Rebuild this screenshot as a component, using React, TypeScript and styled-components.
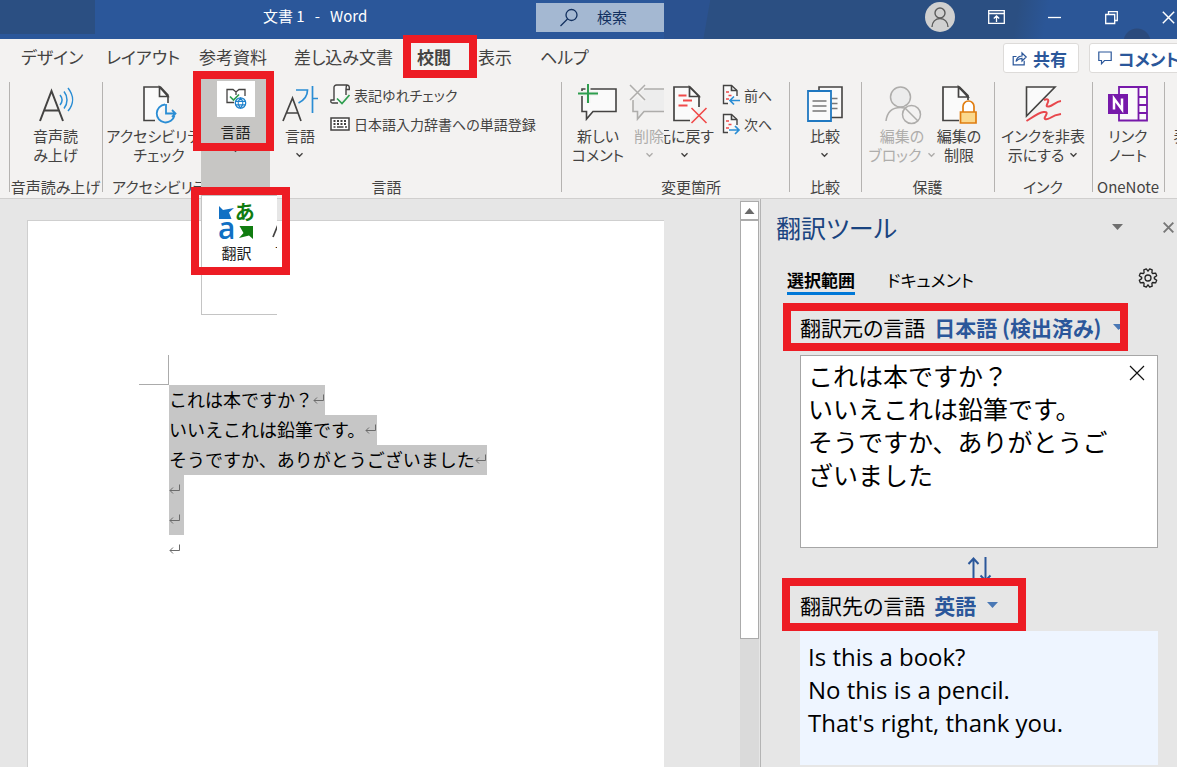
import React from "react";
import styled, { createGlobalStyle, css } from "styled-components";

const RED = "#ed1c24";
const BLUE = "#2b579a";
const INK = "#444342";
const MUTED = "#aeadab";

const GlobalStyle = createGlobalStyle`
  *, *::before, *::after { box-sizing: border-box; }
  body {
    margin: 0;
    background: #e6e6e6;
    color: ${INK};
    font-family: "Noto Sans CJK JP", sans-serif;
    font-size: 15px;
    font-feature-settings: "palt";
  }
  button, select, textarea, input {
    margin: 0;
    padding: 0;
    border: 0;
    background: none;
    color: inherit;
    font: inherit;
    font-feature-settings: inherit;
  }
  svg { display: block; flex: none; overflow: visible; }
`;

const Window = styled.div`
  display: flex;
  flex-direction: column;
  height: 100vh;
  overflow: hidden;
`;

/* Red marker drawn over the part it points out */
const Marker = styled.span<{ $inset: string }>`
  position: absolute;
  inset: ${(p) => p.$inset};
  border: 8px solid ${RED};
  pointer-events: none;
  z-index: 3;
`;

/* ---------- title bar ---------- */

const TitleBar = styled.header`
  display: flex;
  flex: none;
  height: 39px;
  background: ${BLUE};
  color: #fff;
`;

const TitleShade = styled.div`
  width: 95px;
  height: 34px;
  background: #2b4f82;
`;

const DocTitle = styled.h1`
  margin: 0 0 0 168px;
  width: 273px;
  font-size: 15px;
  font-weight: 400;
  line-height: 31px;
  white-space: pre;
`;

const Search = styled.label`
  display: flex;
  align-items: center;
  gap: 18px;
  width: 128px;
  height: 29px;
  margin-top: 3px;
  padding-left: 23px;
  background: #a4b8d2;
  color: #12305f;
`;

const SearchInput = styled.input`
  width: 60px;
  height: 27px;
  padding-bottom: 2px;
  outline: 0;
  &::placeholder { color: #12305f; opacity: 1; }
`;

const TitleArt = styled.div`
  display: flex;
  flex: 1;
  justify-content: flex-end;
  align-items: center;
  padding-bottom: 5px;
  overflow: hidden;
  background:
    radial-gradient(circle at calc(100% - 40px) 42px, #2b4a7c 13px, transparent 14px),
    linear-gradient(100deg, #2b5290 45px, #2b4f82 46px, #2b4f82 350px, #2b5697 380px);
`;

const Avatar = styled.button`
  display: grid;
  place-items: center;
  width: 30px;
  height: 30px;
  margin-right: 33px;
  border-radius: 50%;
  background: #d0d0d0;
`;

const WindowButton = styled.button<{ $gap: number }>`
  flex: none;
  margin-right: ${(p) => p.$gap}px;
`;

/* ---------- tabs ---------- */

const TabBar = styled.nav`
  display: flex;
  flex: none;
  align-items: flex-start;
  height: 39px;
  padding-left: 21px;
  background: #f3f2f1;
`;

const Tab = styled.a<{ $width: number; $active?: boolean }>`
  position: relative;
  flex: none;
  width: ${(p) => p.$width}px;
  color: ${INK};
  font-size: 17px;
  font-weight: ${(p) => (p.$active ? 700 : 400)};
  line-height: 36px;
  text-decoration: none;
  white-space: nowrap;
`;

const TabActions = styled.div`
  display: flex;
  flex: 1;
  justify-content: flex-end;
  gap: 10px;
  margin-right: -16px;
  padding-top: 4px;
`;

const ActionButton = styled.button<{ $width: number }>`
  display: flex;
  flex: none;
  align-items: center;
  gap: 6px;
  width: ${(p) => p.$width}px;
  height: 30px;
  padding-left: 8px;
  border: 1px solid #dddbd9;
  border-radius: 3px;
  background: #fff;
  color: ${BLUE};
  font-size: 17px;
  font-weight: 700;
  white-space: nowrap;
`;

/* ---------- ribbon ---------- */

const Ribbon = styled.div`
  display: flex;
  flex: none;
  height: 121px;
  padding-left: 9px;
  border-bottom: 1px solid #d0cfce;
  background: #f3f2f1;
`;

const Group = styled.section<{ $width: number; $plain?: boolean }>`
  display: flex;
  flex: none;
  flex-direction: column;
  justify-content: space-between;
  width: ${(p) => p.$width}px;
  overflow: hidden;
  background: ${(p) =>
    p.$plain ? "none" : "linear-gradient(#b5b3b1, #b5b3b1) 0 4px / 1px 110px no-repeat"};
`;

const GroupTools = styled.div<{ $pad?: string }>`
  display: flex;
  padding: ${(p) => p.$pad || "0"};
`;

const GroupName = styled.h2<{ $pad?: string }>`
  margin: 0;
  padding: ${(p) => p.$pad || "0"};
  font-size: 15px;
  font-weight: 400;
  line-height: 22px;
  text-align: center;
  white-space: nowrap;
`;

const IconSlot = styled.span`
  height: 36px;
`;

const ToolLabel = styled.span`
  display: flex;
  flex-direction: column;
  align-items: center;
  margin-top: 4px;
`;

const LabelLine = styled.span`
  display: flex;
  align-items: center;
  gap: 5px;
  min-height: 19px;
`;

/* A button partly hidden by its neighbour keeps one side in view */
const clipSides = {
  left: css`
    align-items: flex-start;
    overflow: hidden;
    ${ToolLabel} { margin-left: 5px; }
  `,
  right: css`
    align-items: flex-end;
    overflow: hidden;
    ${IconSlot} { margin-right: 6px; }
  `,
  none: css`
    align-items: center;
  `,
};

const Tool = styled.button<{ $width: number; $clip?: "left" | "right" }>`
  display: flex;
  flex: none;
  flex-direction: column;
  width: ${(p) => p.$width}px;
  padding-top: 8px;
  line-height: 19px;
  text-align: center;
  white-space: nowrap;
  ${(p) => clipSides[p.$clip || "none"]}
  &:disabled { color: ${MUTED}; }
`;

const ToolStack = styled.div<{ $gap?: number }>`
  display: flex;
  flex-direction: column;
  gap: 8px;
  margin-left: ${(p) => p.$gap || 0}px;
  padding-top: 6px;
`;

const SmallTool = styled.button`
  display: flex;
  align-items: center;
  gap: 4px;
  height: 21px;
  font-size: 14px;
  white-space: nowrap;
`;

const OpenColumn = styled.div`
  position: relative;
  flex: none;
  width: 69px;
  background: #c7c6c4;
`;

const OpenTool = styled.button`
  display: flex;
  flex-direction: column;
  align-items: center;
  gap: 5px;
  width: 100%;
  padding-top: 3px;
  color: #222;
  line-height: 20px;
`;

const IconTile = styled.span`
  display: grid;
  place-items: center;
  width: 38px;
  height: 36px;
  background: #fff;
`;

const DropMenu = styled.div`
  position: absolute;
  top: 117px;
  left: 0;
  z-index: 2;
`;

const MenuSheet = styled.div`
  display: flex;
  width: 76px;
  height: 120px;
  overflow: hidden;
  border: solid #c4c4c4;
  border-width: 1px 0 1px 1px;
  background: #fff;
`;

const MenuItem = styled.button<{ $width: number }>`
  display: flex;
  flex: none;
  flex-direction: column;
  align-items: center;
  gap: 2px;
  width: ${(p) => p.$width}px;
  height: 70px;
  padding-top: 6px;
  color: #222;
  line-height: 22px;
`;

/* ---------- document ---------- */

const Body = styled.main`
  display: flex;
  flex: 1;
  min-height: 0;
`;

const Canvas = styled.div`
  display: flex;
  flex: 1;
  padding: 21px 76px 0 27px;
`;

const Sheet = styled.article`
  flex: 1;
  padding-top: 134px;
  border: solid #cfcfcf;
  border-width: 1px 0 0 1px;
  background: #fff;
`;

const CropMark = styled.div`
  width: 30px;
  height: 30px;
  margin-left: 111px;
  border: solid #ababab;
  border-width: 0 1px 1px 0;
`;

const Paragraph = styled.p<{ $selected?: boolean }>`
  display: flex;
  align-items: center;
  width: max-content;
  min-width: 15px;
  height: 30px;
  margin: 0 0 0 141px;
  padding-bottom: 2px;
  background: ${(p) => (p.$selected ? "#c6c6c6" : "none")};
  color: #000;
  font-size: 18px;
  font-feature-settings: normal;
  white-space: nowrap;
`;

const Scrollbar = styled.div`
  display: flex;
  flex: none;
  flex-direction: column;
  width: 19px;
  padding-top: 2px;
  background: #dadada;
`;

const ScrollUp = styled.button`
  display: grid;
  place-items: center;
  height: 19px;
  border: 1px solid #ababab;
  background: #fff;
`;

const ScrollThumb = styled.div`
  flex: 0 1 74%;
  border: 1px solid #ababab;
  background: #fff;
`;

/* ---------- translator pane ---------- */

const Pane = styled.aside`
  flex: 0 0 417px;
  margin-left: 1px;
  border-left: 1px solid #b4b4b4;
  color: #000;
`;

const PaneHeader = styled.div`
  display: flex;
  align-items: center;
  height: 48px;
  padding: 8px 0 0 15px;
`;

const PaneTitle = styled.h2`
  flex: 1;
  margin: 0;
  color: #1a4480;
  font-size: 25px;
  font-weight: 400;
  line-height: 36px;
`;

const PaneButton = styled.button<{ $gap: number }>`
  margin-right: ${(p) => p.$gap}px;
`;

const PaneTabs = styled.div`
  display: flex;
  align-items: flex-end;
  height: 48px;
  padding: 0 19px 0 26px;
`;

const PaneTab = styled.button<{ $active?: boolean }>`
  margin-right: 32px;
  padding-bottom: 1px;
  border-bottom: 3px solid ${(p) => (p.$active ? "#0078d7" : "transparent")};
  font-size: 17px;
  font-weight: ${(p) => (p.$active ? 700 : 400)};
  line-height: 22px;
`;

const GearButton = styled.button`
  margin: 0 0 7px auto;
`;

const LanguageRow = styled.div<{ $width: number; $height: number }>`
  display: flex;
  align-items: center;
  width: ${(p) => p.$width}px;
  height: ${(p) => p.$height}px;
  margin-left: 21px;
  padding-left: 10px;
  overflow: hidden;
  border: 8px solid ${RED};
  font-size: 21px;
  white-space: nowrap;
`;

const SourceRow = styled(LanguageRow)`
  margin: 8px 0 0 22px;
  padding-left: 9px;
`;

const LanguageSelect = styled.select`
  appearance: none;
  margin: 0 11px 0 9px;
  color: ${BLUE};
  font-weight: 700;
  outline: 0;
`;

const SourceBox = styled.div`
  display: flex;
  align-items: flex-start;
  height: 193px;
  margin: 4px 19px 0 39px;
  border: 1px solid #a6a6a6;
  background: #fff;
`;

const SourceText = styled.textarea`
  flex: 1;
  min-width: 0;
  height: 188px;
  padding: 3px 0 0 7px;
  overflow: hidden;
  resize: none;
  outline: 0;
  font-size: 25px;
  font-feature-settings: normal;
  line-height: 33px;
`;

const ClearButton = styled.button`
  margin: 9px 12px 0 0;
`;

const SwapRow = styled.div`
  display: flex;
  justify-content: center;
  height: 30px;
  margin: 0 19px 0 39px;
  padding-top: 8px;
  overflow: hidden;
`;

const Output = styled.output`
  display: block;
  height: 134px;
  margin: 0 19px 0 39px;
  padding: 9px 8px;
  background: #eef5ff;
  font-family: "Open Sans", "Noto Sans", sans-serif;
  font-size: 24px;
  line-height: 33px;
  white-space: pre-line;
`;

/* ---------- icons ---------- */

const Caret = ({ color = INK }: { color?: string }) => (
  <svg width="9" height="6" fill="none" stroke={color} strokeWidth="1.4">
    <path d="M1.5 1.2l3 3 3-3" />
  </svg>
);

const Triangle = ({ color, up }: { color: string; up?: boolean }) => (
  <svg width="11" height="6" fill={color}>
    <path d={up ? "M5.5 0l5 6H.5z" : "M0 0h11L5.5 6z"} />
  </svg>
);

const Cross = ({ size, color, weight = 1.4 }: { size: number; color: string; weight?: number }) => (
  <svg width={size} height={size} viewBox="0 0 16 16" fill="none" stroke={color} strokeWidth={weight}>
    <path d="M1 1l14 14M15 1L1 15" />
  </svg>
);

const SearchIcon = () => (
  <svg width="20" height="20" fill="none" stroke="#12305f" strokeWidth="1.3">
    <circle cx="12.5" cy="7" r="5.5" />
    <path d="M8.5 11L1.5 18" />
  </svg>
);

const PersonIcon = () => (
  <svg width="20" height="22" fill="none" stroke="#5c5c5c" strokeWidth="1.4">
    <circle cx="10" cy="7" r="5" />
    <path d="M2 21c0-5 3.5-8.5 8-8.5s8 3.5 8 8.500" />
  </svg>
);

const RibbonModeIcon = () => (
  <svg width="17" height="14" fill="none" stroke="#fff" strokeWidth="1.3">
    <path d="M.7.7h15.6v12.6H.7zM.7 3.5h15.6M8.5 12V6M5.8 8.5l2.7-2.7 2.7 2.7" />
  </svg>
);

const MinimiseIcon = () => (
  <svg width="13" height="13" stroke="#fff" strokeWidth="1.3"><path d="M0 6.500h13" /></svg>
);

const RestoreIcon = () => (
  <svg width="13" height="13" fill="none" stroke="#fff" strokeWidth="1.3">
    <path d="M.7 3.5h9v9h-9zM3.5 3.5V.7h8.800v8.800H9.700" />
  </svg>
);

const ShareIcon = () => (
  <svg width="15" height="15" fill="none" stroke={BLUE} strokeWidth="1.2">
    <path d="M4.5 5.5H1.200v8.300h11v-4" />
    <path d="M4 10.5c.5-3.500 2.500-5.300 6-5.500V2l4.200 4-4.200 4V7.300c-3 0-4.500 1-6 3.200z" />
  </svg>
);

const CommentIcon = () => (
  <svg width="14" height="14" fill="none" stroke={BLUE} strokeWidth="1.2">
    <path d="M.8 1h12.400v8.500H6.500L3.500 12.800V9.500H.8z" />
  </svg>
);

const ReadAloudIcon = () => (
  <svg width="36" height="36" fill="none">
    <path d="M2 35L13.500 5 25 35M6 24.500h15" stroke={INK} strokeWidth="2" />
    <g stroke="#2a8dd4" strokeWidth="1.5">
      <path d="M22 9c2.500 3 2.500 7 0 10M26 5.500c4 5 4 12 0 17M30 2c6 7.500 6 16 0 23" />
    </g>
  </svg>
);

const AccessibilityIcon = () => (
  <svg width="34" height="36" fill="none">
    <path d="M13 34.500H2V1h16.500L26 9v8" fill="#fafafa" stroke={INK} strokeWidth="1.6" />
    <path d="M17.500 1v9.500H26z" fill="#fafafa" stroke={INK} strokeWidth="1.6" />
    <path d="M23 18.500a9 9 0 1 0 9.500 11" stroke="#2a8dd4" strokeWidth="1.8" />
    <path d="M24 18v9.500h9.500M30 24l3.500 3.500L30 31" stroke="#2a8dd4" strokeWidth="1.8" />
  </svg>
);

const BookGlobeIcon = () => (
  <svg width="20" height="22" fill="none">
    <path d="M8 14.500H1v-13h6l3 2.500 3-2.500h6V8M10 4v3" stroke={INK} strokeWidth="1.3" />
    <path d="M4 8.500l3.500 3.500L13 6.500" stroke="#2e9e4f" strokeWidth="1.7" />
    <circle cx="14.5" cy="15" r="5.2" fill="#fff" stroke="#1b80cc" strokeWidth="1.3" />
    <path d="M9.500 13.300h10M9.500 16.800h10M14.500 10c-3 3-3 7 0 10 3-3 3-7 0-10z" stroke="#1b80cc" strokeWidth="1.2" />
  </svg>
);

const LanguageIcon = () => (
  <svg width="36" height="36" fill="none">
    <path d="M1 35L10.500 12 19 35M4.500 27h12" stroke={INK} strokeWidth="1.7" />
    <path d="M14 4h11.500c0 6-3 10-9 13M30.500 0v27M30.500 12.500h5.500" stroke="#2a8dd4" strokeWidth="1.7" />
  </svg>
);

const ScrollCheckIcon = () => (
  <svg width="20" height="21" fill="none">
    <path d="M8 19H2.500c-1.500 0-2-1-1.500-3h3V3.500C4 2 5 1 6.500 1H17c2 0 2.500 1.500 2.300 4.500H16V11M17 1c-1 1-1 2.500-1 4.500" fill="#fafafa" stroke={INK} strokeWidth="1.4" />
    <path d="M7 14.500l5 5 7.500-8.500" stroke="#2e9e4f" strokeWidth="1.7" />
  </svg>
);

const KeyboardIcon = () => (
  <svg width="20" height="14" fill="none" stroke={INK}>
    <path d="M1 1h18v12H1z" strokeWidth="1.5" fill="#fff" />
    <path d="M3.500 4h13.500M3.500 7h13.500" strokeWidth="2" strokeDasharray="2 1.5" />
    <path d="M3.500 10h2M7 10h6.500M15 10h2" strokeWidth="1.5" />
  </svg>
);

const NewCommentIcon = () => (
  <svg width="38" height="36" fill="none">
    <path d="M3 3h34v22.500H14L7.500 33v-7.500H3z" fill="#fafafa" stroke={INK} strokeWidth="1.6" />
    <path d="M9 -2v19M-1 7.500h20" stroke="#f3f2f1" strokeWidth="5" />
    <path d="M9 -2v19M-1 7.500h20" stroke="#2e9e4f" strokeWidth="2" />
  </svg>
);

const DeleteCommentIcon = () => (
  <svg width="38" height="36" fill="none">
    <path d="M15 3h23v22.500H15L8.500 33v-7.500H4V14" fill="#ededed" stroke={MUTED} strokeWidth="1.6" />
    <path d="M0 -1l15 15M15-1L0 14" stroke="#f3f2f1" strokeWidth="5" />
    <path d="M1 -1l15 15M16-1L1 14" stroke={MUTED} strokeWidth="1.5" />
  </svg>
);

const RejectIcon = () => (
  <svg width="36" height="38" fill="none">
    <path d="M18 34.500H2V1h16l9 9v11" fill="#fafafa" stroke={INK} strokeWidth="1.7" />
    <path d="M17.500 1v9.500H27z" fill="#fafafa" stroke={INK} strokeWidth="1.7" />
    <path d="M6.500 9.500h8M11 14.500h9M6.500 19.500h9" stroke="#f04a4a" strokeWidth="1.8" />
    <path d="M19.500 22l15 15M34.500 22l-15 15" stroke="#f04a4a" strokeWidth="1.6" />
  </svg>
);

const StepIcon = ({ forward }: { forward?: boolean }) => (
  <svg width="18" height="21" fill="none">
    <path d="M6 19.500H1.500v-18h8l5.500 5V12" fill="#fafafa" stroke={INK} strokeWidth="1.4" />
    <path d="M9.500 1.500v5H15" stroke={INK} strokeWidth="1.6" />
    <path d="M4 8h3M6.500 11.500h3M4 15h3" stroke="#f04a4a" strokeWidth="1.6" />
    <path
      d={forward ? "M7 17h10M13 13l4 4-4 4" : "M18 16.500H8M12 12.500l-4 4 4 4"}
      stroke="#2a8dd4"
      strokeWidth="1.7"
    />
  </svg>
);

const CompareIcon = () => (
  <svg width="36" height="36" fill="none">
    <path d="M12 1h23v30.500H12z" fill="#fafafa" stroke={INK} strokeWidth="1.6" />
    <path d="M25 12.500h5.500M25 17.500h5.500M25 22.500h5.500" stroke="#777" strokeWidth="1.5" />
    <path d="M1 5h23v30H1z" fill="#fafafa" stroke="#1f78c1" strokeWidth="1.8" />
    <path d="M5.500 15h14M5.500 20h14M5.500 25h14" stroke="#777" strokeWidth="1.5" />
  </svg>
);

const BlockAuthorsIcon = () => (
  <svg width="34" height="38" fill="none" stroke={MUTED} strokeWidth="1.5">
    <circle cx="15.5" cy="11" r="10" fill="#ececec" />
    <path d="M1 35c1-8 5.500-13.500 14.500-13.500 3 0 5 .5 7 2" />
    <circle cx="26.5" cy="28.5" r="9" fill="#f3f2f1" />
    <path d="M20 22l13 13" />
  </svg>
);

const RestrictIcon = () => (
  <svg width="36" height="38" fill="none">
    <path d="M18 34.500H2V1h16.500L27 9.500V14" fill="#fafafa" stroke={INK} strokeWidth="1.7" />
    <path d="M17.500 1v10H27z" fill="#fafafa" stroke={INK} strokeWidth="1.7" />
    <path d="M22 26v-5.500a5.500 5.500 0 0 1 11 0V26" fill="#fff" stroke="#e07d10" strokeWidth="1.7" />
    <path d="M19.500 26h15.500v11H19.500z" fill="#fbd88c" stroke="#e07d10" strokeWidth="1.7" />
  </svg>
);

const InkIcon = () => (
  <svg width="36" height="36" fill="none">
    <path d="M1.500 1H30L1.500 30z" fill="#fafafa" stroke={INK} strokeWidth="1.6" />
    <path d="M19 14c3-1.500 5-1 4 2-1 3-3 5 1 4.500 4-1 7-5 12-5.500M1.500 35c5-3 12-8.500 17-9 5-.5 3 2.500 1.500 5-1.500 2.500 1.500 3 5 1 3-2 7-3.500 11-4" stroke="#e8474c" strokeWidth="2" />
  </svg>
);

const OneNoteIcon = () => (
  <svg width="40" height="36" fill="none">
    <path d="M11 1h28v33.500H11z" fill="#fafafa" stroke="#7719aa" strokeWidth="1.8" />
    <path d="M30.500 1v33.500M30.500 11H39M30.500 19H39M30.500 27H39" stroke="#7719aa" strokeWidth="1.8" />
    <path d="M0 8h20v20H0z" fill="#7719aa" />
    <path d="M6 23.500v-11l8 11v-11" stroke="#fff" strokeWidth="2.5" />
  </svg>
);

const TranslateIcon = () => (
  <svg width="38" height="38" fontFamily="Noto Sans CJK JP" fontWeight="700">
    <path d="M1 4l4 4 11-2-5 4.500 2.500 6.500H1z" fill="#1170c4" />
    <text x="0" y="37" fontSize="30" fontFamily="Open Sans" fontWeight="600" fill="#1170c4">a</text>
    <text x="17" y="18" fontSize="20" fill="#107c10">あ</text>
    <path d="M21.500 24h13.500v13l-4-3.500-10 2.500 4.500-5z" fill="#107c10" />
  </svg>
);

const ReturnMark = () => (
  <svg width="12" height="12" fill="none" stroke="#6b6b6b">
    <path d="M10.500 1.500v6h-9.500M4 4.500l-3 3 3 3" />
  </svg>
);

const GearIcon = () => (
  <svg width="20" height="20" viewBox="0 0 20 20" fill="none" stroke="#222" strokeWidth="1.3" strokeLinejoin="round">
    <circle cx="10" cy="10" r="3" />
    <path d="M10 3.200L11.700.8l2.500 1 -.3 2.900 .8.800 2.900-.4 1.100 2.600-2.400 1.700v1.200l2.400 1.700-1.100 2.600-2.900-.4-.8.800.3 2.900-2.500 1L10 16.800 8.300 19.200l-2.500-1 .3-2.900-.8-.800-2.900.4-1.100-2.600 2.400-1.700V9.400L1.300 7.700l1.100-2.600 2.900.4.8-.8-.3-2.900 2.500-1z" />
  </svg>
);

const SwapIcon = () => (
  <svg width="24" height="28" fill="none" stroke={BLUE} strokeWidth="2">
    <path d="M6.500 26V3M1.500 8l5-5.500 5 5.500M18.500 1v23M13.500 19.500l5 5 5-5" />
  </svg>
);

/* ---------- composition ---------- */

type BigToolProps = {
  icon: React.ReactNode;
  lines: string[];
  width: number;
  caret?: "below" | "beside";
  clip?: "left" | "right";
  disabled?: boolean;
};

const BigTool = ({ icon, lines, width, caret, clip, disabled }: BigToolProps) => {
  const arrow = <Caret color={disabled ? MUTED : INK} />;
  return (
    <Tool $width={width} $clip={clip} disabled={disabled}>
      <IconSlot>{icon}</IconSlot>
      <ToolLabel>
        {lines.map((line, i) => (
          <LabelLine key={line}>
            {line}
            {caret === "beside" && i === lines.length - 1 && arrow}
          </LabelLine>
        ))}
        {caret === "below" && <LabelLine>{arrow}</LabelLine>}
      </ToolLabel>
    </Tool>
  );
};

const tabs = [
  { name: "デザイン", width: 85 },
  { name: "レイアウト", width: 93 },
  { name: "参考資料", width: 95 },
  { name: "差し込み文書", width: 123 },
  { name: "校閲", width: 61, active: true },
  { name: "表示", width: 62 },
  { name: "ヘルプ", width: 60 },
];

const paragraphs = [
  { text: "これは本ですか？", selected: true },
  { text: "いいえこれは鉛筆です。", selected: true },
  { text: "そうですか、ありがとうございました", selected: true },
  { text: "", selected: true },
  { text: "", selected: true },
  { text: "", selected: false },
];

const sourceText = "これは本ですか？\nいいえこれは鉛筆です。\nそうですか、ありがとうございました";
const translated = "Is this a book?\nNo this is a pencil.\nThat's right, thank you.";

export default function App() {
  return (
    <Window>
      <GlobalStyle />
      <TitleBar>
        <TitleShade />
        <DocTitle>{"文書 1   -   Word"}</DocTitle>
        <Search>
          <SearchIcon />
          <SearchInput placeholder="検索" aria-label="検索" />
        </Search>
        <TitleArt>
          <Avatar aria-label="アカウント"><PersonIcon /></Avatar>
          <WindowButton $gap={43} aria-label="リボンの表示オプション"><RibbonModeIcon /></WindowButton>
          <WindowButton $gap={44} aria-label="最小化"><MinimiseIcon /></WindowButton>
          <WindowButton $gap={44} aria-label="元のサイズに戻す"><RestoreIcon /></WindowButton>
          <WindowButton $gap={2} aria-label="閉じる"><Cross size={13} color="#fff" weight={1.8} /></WindowButton>
        </TitleArt>
      </TitleBar>

      <TabBar>
        {tabs.map((t) => (
          <Tab key={t.name} href="#" $width={t.width} $active={t.active}>
            {t.name}
            {t.active && <Marker $inset="-4px 1px -3px -14px" />}
          </Tab>
        ))}
        <TabActions>
          <ActionButton $width={76}><ShareIcon />共有</ActionButton>
          <ActionButton $width={104}><CommentIcon />コメント</ActionButton>
        </TabActions>
      </TabBar>

      <Ribbon>
        <Group $width={93}>
          <GroupTools><BigTool width={93} icon={<ReadAloudIcon />} lines={["音声読", "み上げ"]} /></GroupTools>
          <GroupName>音声読み上げ</GroupName>
        </Group>
        <Group $width={99}>
          <GroupTools $pad="0 0 0 3px">
            <BigTool width={108} icon={<AccessibilityIcon />} lines={["アクセシビリティ", "チェック"]} />
          </GroupTools>
          <GroupName $pad="0 0 0 10px">アクセシビリティ</GroupName>
        </Group>
        <OpenColumn>
          <OpenTool aria-expanded="true">
            <IconTile><BookGlobeIcon /></IconTile>
            言語
            <Caret />
          </OpenTool>
          <Marker $inset="-7px -4px 47px -8px" />
          <DropMenu>
            <MenuSheet>
              <MenuItem $width={69}><TranslateIcon />翻訳</MenuItem>
              <MenuItem $width={38}><LanguageIcon />言語</MenuItem>
            </MenuSheet>
            <Marker $inset="-8px -13px 40px -10px" />
          </DropMenu>
        </OpenColumn>
        <Group $width={291} $plain>
          <GroupTools>
            <BigTool width={60} icon={<LanguageIcon />} lines={["言語"]} caret="below" />
            <ToolStack>
              <SmallTool><ScrollCheckIcon />表記ゆれチェック</SmallTool>
              <SmallTool><KeyboardIcon />日本語入力辞書への単語登録</SmallTool>
            </ToolStack>
          </GroupTools>
          <GroupName $pad="0 58px 0 0">言語</GroupName>
        </Group>
        <Group $width={228}>
          <GroupTools $pad="0 0 0 6px">
            <BigTool width={62} icon={<NewCommentIcon />} lines={["新しい", "コメント"]} />
            <BigTool width={35} icon={<DeleteCommentIcon />} lines={["削除"]} caret="below" clip="left" disabled />
            <BigTool width={50} icon={<RejectIcon />} lines={["元に戻す"]} caret="below" clip="right" />
            <ToolStack $gap={8}>
              <SmallTool><StepIcon />前へ</SmallTool>
              <SmallTool><StepIcon forward />次へ</SmallTool>
            </ToolStack>
          </GroupTools>
          <GroupName $pad="0 0 0 32px">変更箇所</GroupName>
        </Group>
        <Group $width={72}>
          <GroupTools><BigTool width={72} icon={<CompareIcon />} lines={["比較"]} caret="below" /></GroupTools>
          <GroupName>比較</GroupName>
        </Group>
        <Group $width={133}>
          <GroupTools $pad="0 0 0 12px">
            <BigTool width={58} icon={<BlockAuthorsIcon />} lines={["編集の", "ブロック"]} caret="beside" disabled />
            <BigTool width={56} icon={<RestrictIcon />} lines={["編集の", "制限"]} />
          </GroupTools>
          <GroupName>保護</GroupName>
        </Group>
        <Group $width={98}>
          <GroupTools><BigTool width={98} icon={<InkIcon />} lines={["インクを非表", "示にする"]} caret="beside" /></GroupTools>
          <GroupName>インク</GroupName>
        </Group>
        <Group $width={72}>
          <GroupTools><BigTool width={72} icon={<OneNoteIcon />} lines={["リンク", "ノート"]} /></GroupTools>
          <GroupName>OneNote</GroupName>
        </Group>
        <Group $width={60}>
          <GroupTools $pad="0 0 0 9px"><BigTool width={31} icon={null} lines={["表示"]} /></GroupTools>
        </Group>
      </Ribbon>

      <Body>
        <Canvas>
          <Sheet>
            <CropMark />
            {paragraphs.map((p, i) => (
              <Paragraph key={i} $selected={p.selected}>
                {p.text}
                <ReturnMark />
              </Paragraph>
            ))}
          </Sheet>
        </Canvas>
        <Scrollbar>
          <ScrollUp aria-label="上へスクロール"><Triangle color="#6a6a6a" up /></ScrollUp>
          <ScrollThumb />
        </Scrollbar>
        <Pane>
          <PaneHeader>
            <PaneTitle>翻訳ツール</PaneTitle>
            <PaneButton $gap={40} aria-label="作業ウィンドウのオプション"><Triangle color="#6f6f6f" /></PaneButton>
            <PaneButton $gap={3} aria-label="閉じる"><Cross size={11} color="#777" weight={2.8} /></PaneButton>
          </PaneHeader>
          <PaneTabs role="tablist">
            <PaneTab role="tab" aria-selected="true" $active>選択範囲</PaneTab>
            <PaneTab role="tab" aria-selected="false">ドキュメント</PaneTab>
            <GearButton aria-label="設定"><GearIcon /></GearButton>
          </PaneTabs>
          <SourceRow $width={345} $height={48}>
            <label htmlFor="source-language">翻訳元の言語</label>
            <LanguageSelect id="source-language"><option>日本語 (検出済み)</option></LanguageSelect>
            <Triangle color="#4a78b5" />
          </SourceRow>
          <SourceBox>
            <SourceText aria-label="翻訳元の言語" defaultValue={sourceText} spellCheck={false} />
            <ClearButton aria-label="クリア"><Cross size={16} color="#111" weight={1.2} /></ClearButton>
          </SourceBox>
          <SwapRow>
            <button aria-label="言語の入れ替え"><SwapIcon /></button>
          </SwapRow>
          <LanguageRow $width={244} $height={53}>
            <label htmlFor="target-language">翻訳先の言語</label>
            <LanguageSelect id="target-language"><option>英語</option></LanguageSelect>
            <Triangle color="#4a78b5" />
          </LanguageRow>
          <Output>{translated}</Output>
        </Pane>
      </Body>
    </Window>
  );
}
